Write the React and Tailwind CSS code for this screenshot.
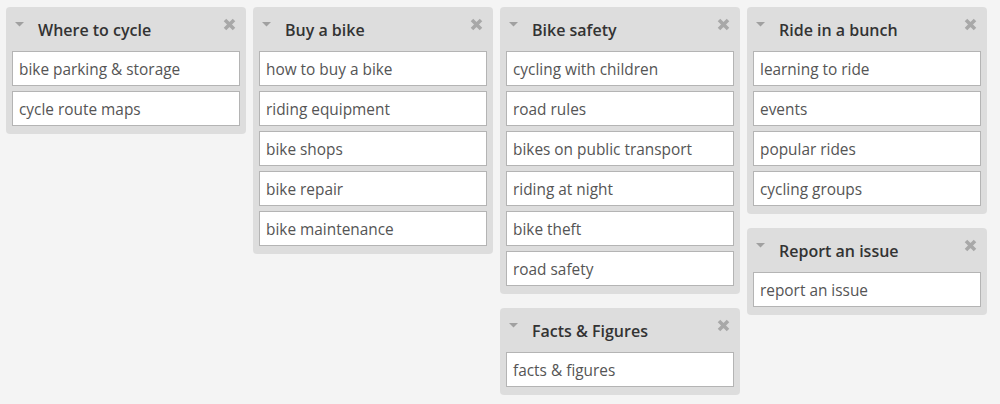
import React from "react";

const columns = [
  [
    { title: "Where to cycle", items: ["bike parking & storage", "cycle route maps"] },
  ],
  [
    {
      title: "Buy a bike",
      items: ["how to buy a bike", "riding equipment", "bike shops", "bike repair", "bike maintenance"],
    },
  ],
  [
    {
      title: "Bike safety",
      items: [
        "cycling with children",
        "road rules",
        "bikes on public transport",
        "riding at night",
        "bike theft",
        "road safety",
      ],
    },
    { title: "Facts & Figures", items: ["facts & figures"] },
  ],
  [
    { title: "Ride in a bunch", items: ["learning to ride", "events", "popular rides", "cycling groups"] },
    { title: "Report an issue", items: ["report an issue"] },
  ],
];

function Panel({ title, items }) {
  return (
    <div className="w-[240px] rounded-[4px] bg-[#dddddd] px-[6px] pb-[8px]">
      <div className="flex h-[44px] items-start">
        <svg width="9" height="5" viewBox="0 0 9 5" className="ml-[3px] mt-[15px] shrink-0">
          <path d="M0 0 L9 0 L4.5 4.5 Z" fill="#a0a0a0" />
        </svg>
        <div className="ml-[14px] mt-[12px] text-[16px] leading-[22px] font-semibold text-[#333333]">
          {title}
        </div>
        <svg width="13" height="13" viewBox="0 0 13 13" className="ml-auto mr-[4px] mt-[11px] shrink-0">
          <path d="M2 2 L11 11 M11 2 L2 11" stroke="#a8a8a8" strokeWidth="3.6" strokeLinecap="butt" />
        </svg>
      </div>
      <div className="flex flex-col gap-[5px]">
        {items.map((it) => (
          <div
            key={it}
            className="flex h-[35px] items-center border border-[#b4b4b4] bg-white px-[6px] pt-[2px] text-[15.4px] text-[#555555]"
          >
            {it}
          </div>
        ))}
      </div>
    </div>
  );
}

export default function App() {
  return (
    <div
      className="flex h-[404px] w-[1000px] items-start gap-[7px] bg-[#f4f4f4] pl-[6px] pt-[7px]"
      style={{ fontFamily: '"Open Sans", sans-serif' }}
    >
      {columns.map((col, i) => (
        <div key={i} className="flex flex-col gap-[14px]">
          {col.map((p) => (
            <Panel key={p.title} {...p} />
          ))}
        </div>
      ))}
    </div>
  );
}
